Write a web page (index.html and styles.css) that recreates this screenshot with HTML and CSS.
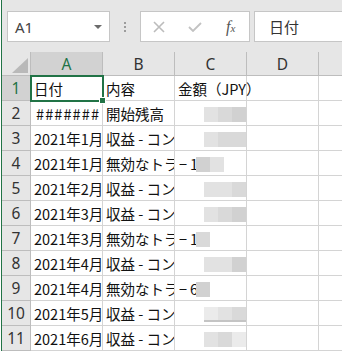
FILE: index.html
```html
<!DOCTYPE html>
<html lang="ja">
<head>
    <meta charset="UTF-8">
    <meta name="viewport" content="width=device-width, initial-scale=1.0">
    <title>Excel - シート</title>
    <link rel="stylesheet" href="styles.css">
</head>
<body>
    <div class="app">
        <!-- 数式バー -->
        <div class="toolbar">
            <div class="name-box">
                <span>A1</span>
                <span class="drop"></span>
            </div>
            <div class="dots"><i></i><i></i><i></i></div>
            <div class="btn-box">
                <svg class="ico-x" width="12" height="12" viewBox="0 0 12 12">
                    <path d="M1 1 L11 11 M11 1 L1 11" stroke="#bcbcbc" stroke-width="1.6" fill="none"/>
                </svg>
                <svg class="ico-ok" width="14" height="10" viewBox="0 0 14 10">
                    <path d="M1 5 L5 9 L13 1" stroke="#c2c2c2" stroke-width="1.8" fill="none"/>
                </svg>
                <span class="fx">f<sub>x</sub></span>
            </div>
            <div class="formula">日付</div>
        </div>

        <!-- シート -->
        <div class="sheet">
            <div class="corner"><span class="tri"></span></div>
            <div class="col-hd active">A</div>
            <div class="col-hd">B</div>
            <div class="col-hd">C</div>
            <div class="col-hd">D</div>
            <div class="col-hd last"></div>

            <div class="row-hd active">1</div>
            <div class="cell sel">日付<span class="handle"></span></div>
            <div class="cell">内容</div>
            <div class="cell over">金額（JPY）</div>
            <div class="cell"></div>
            <div class="cell last"></div>

            <div class="row-hd">2</div>
            <div class="cell hash">#######</div>
            <div class="cell">開始残高</div>
            <div class="cell num"><span class="blur"><i class="g1"></i><i class="g2"></i><i class="g3"></i></span></div>
            <div class="cell"></div>
            <div class="cell last"></div>

            <div class="row-hd">3</div>
            <div class="cell">2021年1月</div>
            <div class="cell">収益 - コンテンツ</div>
            <div class="cell num"><span class="blur"><i class="g1"></i><i class="g2"></i><i class="g2"></i></span></div>
            <div class="cell"></div>
            <div class="cell last"></div>

            <div class="row-hd">4</div>
            <div class="cell">2021年1月</div>
            <div class="cell">無効なトラフィック</div>
            <div class="cell neg"><span class="sign">−1</span><span class="blur"><i class="g3"></i><i class="g1"></i></span></div>
            <div class="cell"></div>
            <div class="cell last"></div>

            <div class="row-hd">5</div>
            <div class="cell">2021年2月</div>
            <div class="cell">収益 - コンテンツ</div>
            <div class="cell num"><span class="blur"><i class="g1"></i><i class="g1"></i><i class="g2"></i></span></div>
            <div class="cell"></div>
            <div class="cell last"></div>

            <div class="row-hd">6</div>
            <div class="cell">2021年3月</div>
            <div class="cell">収益 - コンテンツ</div>
            <div class="cell num"><span class="blur"><i class="g1"></i><i class="g2"></i><i class="g3"></i></span></div>
            <div class="cell"></div>
            <div class="cell last"></div>

            <div class="row-hd">7</div>
            <div class="cell">2021年3月</div>
            <div class="cell">無効なトラフィック</div>
            <div class="cell neg"><span class="sign">−1</span><span class="blur"><i class="g2"></i></span></div>
            <div class="cell"></div>
            <div class="cell last"></div>

            <div class="row-hd">8</div>
            <div class="cell">2021年4月</div>
            <div class="cell">収益 - コンテンツ</div>
            <div class="cell num"><span class="blur"><i class="g1"></i><i class="g1"></i><i class="g3"></i></span></div>
            <div class="cell"></div>
            <div class="cell last"></div>

            <div class="row-hd">9</div>
            <div class="cell">2021年4月</div>
            <div class="cell">無効なトラフィック</div>
            <div class="cell neg"><span class="sign">−6</span><span class="blur"><i class="g3"></i></span></div>
            <div class="cell"></div>
            <div class="cell last"></div>

            <div class="row-hd">10</div>
            <div class="cell">2021年5月</div>
            <div class="cell">収益 - コンテンツ</div>
            <div class="cell num"><span class="blur under"><i class="g0"></i><i class="g1"></i><i class="g2"></i></span></div>
            <div class="cell"></div>
            <div class="cell last"></div>

            <div class="row-hd">11</div>
            <div class="cell">2021年6月</div>
            <div class="cell">収益 - コンテンツ</div>
            <div class="cell num"><span class="blur"><i class="g1"></i><i class="g2"></i><i class="g0"></i></span></div>
            <div class="cell"></div>
            <div class="cell last"></div>
        </div>
    </div>
</body>
</html>
```

FILE: styles.css
```css
body {
    margin: 0;
    background-color: #ffffff;
    font-family: "Noto Sans CJK JP", "Noto Sans", sans-serif;
    overflow: hidden;
}

.app {
    width: 340px;
    height: 351px;
    margin-left: 1px;
    border-left: 1px solid #217346;
    overflow: hidden;
}

/* 数式バー */
.toolbar {
    height: 52px;
    box-sizing: border-box;
    padding: 11px 0 0 5px;
    background-color: #e6e6e6;
    display: flex;
    align-items: flex-start;
}

.name-box {
    width: 103px;
    height: 31px;
    box-sizing: border-box;
    background-color: #fff;
    border: 1px solid #c6c6c6;
    display: flex;
    align-items: center;
    padding: 0 7px 0 7px;
    font-family: "Noto Sans", sans-serif;
    font-size: 15px;
    color: #444;
}

.name-box .drop {
    margin-left: auto;
    width: 0;
    height: 0;
    border-left: 4px solid transparent;
    border-right: 4px solid transparent;
    border-top: 4px solid #6b6b6b;
}

.dots {
    width: 30px;
    height: 31px;
    display: flex;
    flex-direction: column;
    align-items: center;
    justify-content: center;
    gap: 2px;
}

.dots i {
    display: block;
    width: 2px;
    height: 2px;
    background-color: #9c9c9c;
}

.btn-box {
    width: 110px;
    height: 31px;
    box-sizing: border-box;
    background-color: #fff;
    border: 1px solid #c6c6c6;
    display: flex;
    align-items: center;
}

.ico-x {
    margin-left: 12px;
}

.ico-ok {
    margin-left: 23px;
}

.fx {
    margin-left: 24px;
    font-family: "Liberation Serif", serif;
    font-style: italic;
    font-size: 16px;
    color: #555;
    line-height: 1;
}

.fx sub {
    font-size: 11px;
    vertical-align: 0;
}

.formula {
    flex: 1;
    margin-left: 4px;
    margin-right: -4px;
    height: 31px;
    box-sizing: border-box;
    background-color: #fff;
    border: 1px solid #c6c6c6;
    padding-left: 14px;
    font-size: 15px;
    line-height: 29px;
    color: #333;
}

/* シート */
.sheet {
    display: grid;
    grid-template-columns: 29px 72px 72px 72px 72px 1fr;
    grid-template-rows: 24px repeat(11, 25px);
}

.corner {
    background-color: #e6e6e6;
    border-right: 1px solid #bdbdbd;
    border-bottom: 1px solid #bdbdbd;
    position: relative;
}

.corner .tri {
    position: absolute;
    right: 2px;
    bottom: 2px;
    width: 0;
    height: 0;
    border-left: 16px solid transparent;
    border-bottom: 15px solid #b9b9b9;
}

.col-hd,
.row-hd {
    background-color: #e6e6e6;
    border-right: 1px solid #bdbdbd;
    border-bottom: 1px solid #bdbdbd;
    display: flex;
    align-items: center;
    justify-content: center;
    font-family: "Noto Sans", sans-serif;
    font-size: 15.5px;
    color: #333;
}

.col-hd.active,
.row-hd.active {
    background-color: #d2d2d2;
    color: #217346;
}

.col-hd.last,
.cell.last {
    border-right: none;
}

.cell {
    border-right: 1px solid #d4d4d4;
    border-bottom: 1px solid #d4d4d4;
    display: flex;
    align-items: center;
    padding: 1px 0 0 3px;
    font-size: 14.5px;
    color: #111;
    white-space: nowrap;
    overflow: hidden;
    min-width: 0;
}

.cell.over {
    overflow: visible;
}

.cell.hash {
    padding-left: 5px;
    letter-spacing: 1.1px;
}

.cell.sel {
    position: relative;
    overflow: visible;
}

.cell.sel::after {
    content: "";
    position: absolute;
    top: -1px;
    left: -1px;
    right: -2px;
    bottom: -2px;
    border: 2px solid #217346;
}

.cell.sel .handle {
    position: absolute;
    right: -4px;
    bottom: -4px;
    width: 5px;
    height: 5px;
    background-color: #217346;
    border: 1px solid #fff;
    z-index: 1;
}

.cell.num {
    padding-left: 0;
    justify-content: flex-end;
}

.cell.neg {
    padding-left: 4px;
}

.sign {
    width: 17px;
    overflow: hidden;
    flex-shrink: 0;
    letter-spacing: 3px;
}

/* ぼかし */
.blur {
    display: flex;
    height: 15px;
    margin-top: 2px;
}

.blur i {
    display: block;
    width: 14px;
    height: 100%;
}

.blur.under {
    border-bottom: 2px solid #c4c4c4;
    height: 13px;
}

.g0 { background-color: #ebebeb; }
.g1 { background-color: #e2e2e2; }
.g2 { background-color: #d9d9d9; }
.g3 { background-color: #d1d1d1; }
```
